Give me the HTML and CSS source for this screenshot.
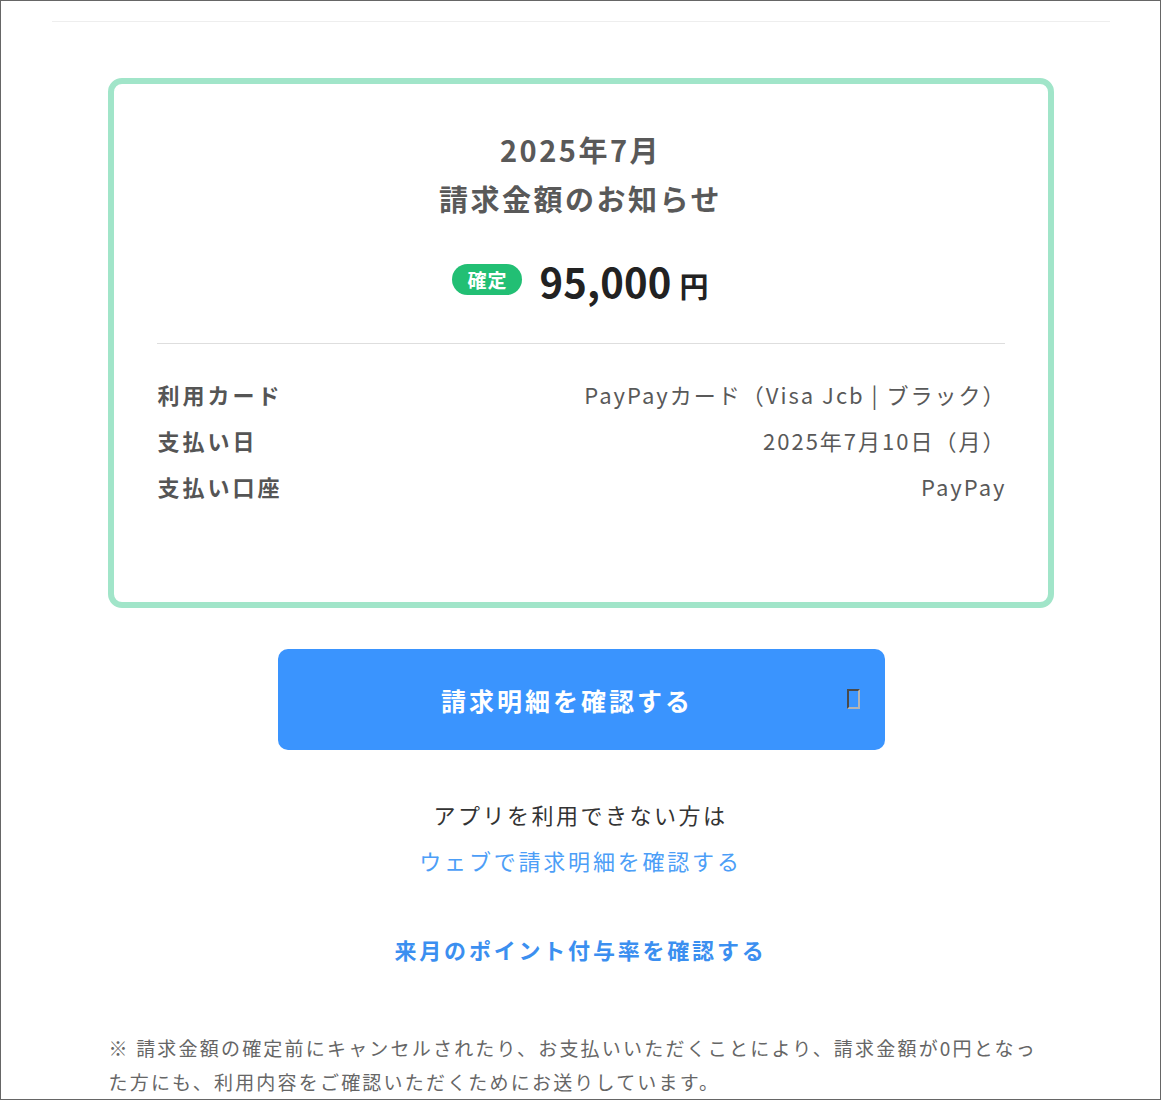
FILE: index.html
```html
<!DOCTYPE html>
<html lang="ja">
<head>
<meta charset="utf-8">
<title>請求金額のお知らせ</title>
<link rel="stylesheet" href="styles.css">
</head>
<body>
<div class="frame">
  <div class="topline"></div>
  <div class="content">
    <section class="card">
      <h1 class="title">2025年7月<br>請求金額のお知らせ</h1>
      <div class="amount-row">
        <span class="badge">確定</span>
        <span class="amount">95,000</span>
        <span class="yen">円</span>
      </div>
      <div class="divider"></div>
      <dl class="details">
        <div class="row"><dt>利用カード</dt><dd>PayPayカード（Visa Jcb | ブラック）</dd></div>
        <div class="row"><dt>支払い日</dt><dd>2025年7月10日（月）</dd></div>
        <div class="row"><dt>支払い口座</dt><dd>PayPay</dd></div>
      </dl>
    </section>

    <a class="button" href="#"><span class="button-text">請求明細を確認する</span><span class="tofu"></span></a>

    <p class="note">アプリを利用できない方は</p>
    <a class="weblink" href="#">ウェブで請求明細を確認する</a>

    <a class="pointlink" href="#">来月のポイント付与率を確認する</a>

    <p class="footnote">※ 請求金額の確定前にキャンセルされたり、お支払いいただくことにより、請求金額が0円となった方にも、利用内容をご確認いただくためにお送りしています。</p>
  </div>
</div>
</body>
</html>
```

FILE: styles.css
```css
html, body {
  margin: 0;
  padding: 0;
  background: #fff;
}
body {
  font-family: "Noto Sans CJK JP", "Noto Sans", sans-serif;
  color: #555;
}
.frame {
  box-sizing: border-box;
  width: 1161px;
  height: 1100px;
  border: 1px solid #666;
  overflow: hidden;
  padding-top: 20px;
}
.topline {
  height: 1px;
  background: #eeeeee;
  margin: 0 50px 0 51px;
}
.content {
  display: flex;
  flex-direction: column;
  align-items: center;
}
.card {
  box-sizing: border-box;
  width: 946px;
  margin-top: 56px;
  border: 6px solid #a1e5c9;
  border-radius: 14px;
  padding: 41px 43px 93px;
}
.title {
  margin: 0;
  text-align: center;
  font-size: 29px;
  line-height: 49px;
  font-weight: 700;
  color: #595959;
  letter-spacing: 2.5px;
}
.amount-row {
  display: flex;
  align-items: center;
  justify-content: center;
  height: 60px;
  margin-top: 28px;
}
.badge {
  display: inline-flex;
  align-items: center;
  justify-content: center;
  width: 70px;
  height: 31px;
  border-radius: 16px;
  background: #22bf74;
  color: #fff;
  font-size: 19px;
  font-weight: 700;
  letter-spacing: 1px;
  margin-right: 17px;
  margin-top: -4px;
}
.amount {
  font-size: 40px;
  font-weight: 700;
  color: #222;
  letter-spacing: 0.2px;
}
.yen {
  font-size: 29px;
  font-weight: 700;
  color: #222;
  margin-left: 8px;
  margin-top: 8px;
}
.divider {
  height: 1px;
  background: #dedede;
  margin-top: 32px;
}
.details {
  margin: 27px 0 0;
}
.row {
  display: flex;
  justify-content: space-between;
  line-height: 46px;
  font-size: 22px;
}
.row dt {
  font-weight: 700;
  color: #555;
  letter-spacing: 3px;
  padding-left: 1px;
}
.row dd {
  margin: 0;
  color: #595959;
  font-weight: 400;
  letter-spacing: 2px;
  margin-right: -2px;
}
.button {
  position: relative;
  box-sizing: border-box;
  width: 607px;
  height: 101px;
  margin-top: 41px;
  margin-left: 2px;
  border-radius: 10px;
  background: #3a94fe;
  display: flex;
  align-items: center;
  justify-content: center;
  padding-right: 29px;
  text-decoration: none;
}
.button-text {
  color: #fff;
  font-size: 25px;
  font-weight: 700;
  letter-spacing: 3px;
}
.tofu {
  position: absolute;
  right: 25px;
  top: 40px;
  box-sizing: border-box;
  width: 13px;
  height: 20px;
  border: 2px solid;
  border-color: #4a4a4a #b4b4b4 #b4b4b4 #4a4a4a;
}
.note {
  margin: 41px 0 0;
  font-size: 22px;
  line-height: 46px;
  color: #333;
  letter-spacing: 2.5px;
}
.weblink {
  font-size: 22px;
  line-height: 46px;
  color: #4c9ef7;
  text-decoration: none;
  letter-spacing: 2.8px;
}
.pointlink {
  margin-top: 43px;
  font-size: 22px;
  line-height: 46px;
  font-weight: 700;
  color: #3b8ff0;
  text-decoration: none;
  letter-spacing: 2.8px;
}
.footnote {
  box-sizing: border-box;
  width: 946px;
  margin: 59px 0 0;
  padding-left: 1px;
  padding-right: 6px;
  font-size: 19px;
  line-height: 34px;
  color: #666;
  letter-spacing: 2.2px;
}
```
